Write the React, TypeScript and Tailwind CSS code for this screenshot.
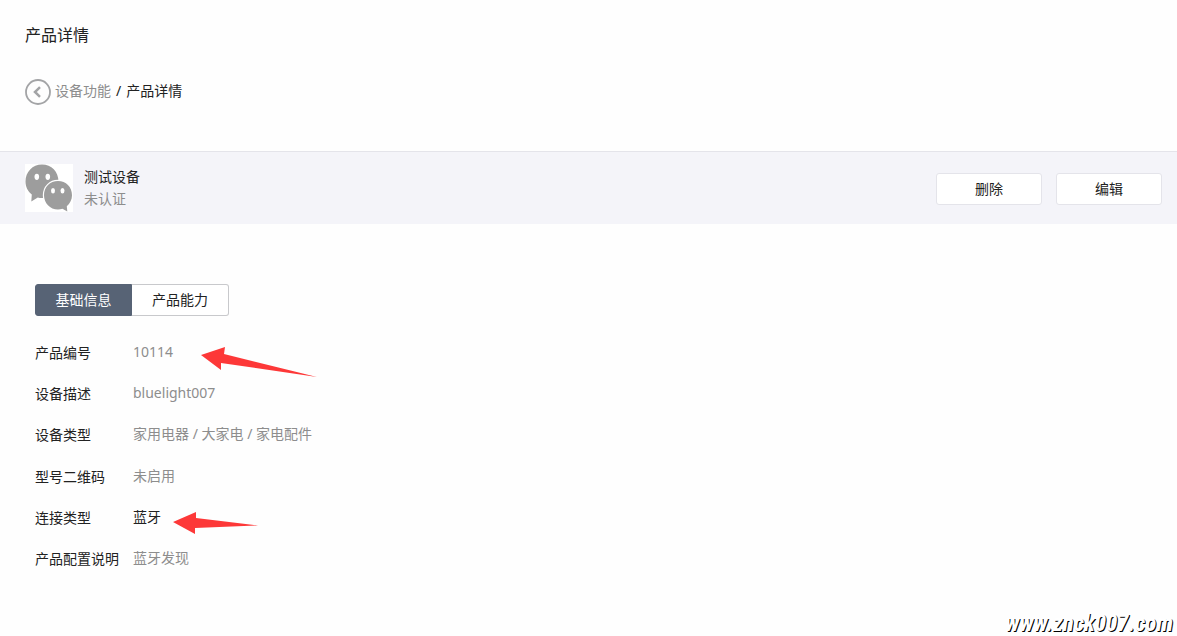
import React, { useState } from "react";

type Field = {
  label: string;
  value: string;
  strong?: boolean;
  arrow?: React.ReactNode;
};

const LongArrow = () => (
  <svg
    className="absolute top-1 left-[68px]"
    width="116"
    height="32"
    viewBox="0 0 116 32"
    aria-hidden="true"
  >
    <path d="M0 9 L24 1 L23 8 L116 31 L20 17 L20 24 Z" fill="#fd3838" />
  </svg>
);

const ShortArrow = () => (
  <svg
    className="absolute top-1 left-[40px]"
    width="86"
    height="24"
    viewBox="0 0 86 24"
    aria-hidden="true"
  >
    <path d="M0 11 L23 1 L23 7 L85 14.5 L22 17 L22 23 Z" fill="#fd3838" />
  </svg>
);

const fields: Field[] = [
  { label: "产品编号", value: "10114", arrow: <LongArrow /> },
  { label: "设备描述", value: "bluelight007" },
  { label: "设备类型", value: "家用电器 / 大家电 / 家电配件" },
  { label: "型号二维码", value: "未启用" },
  { label: "连接类型", value: "蓝牙", strong: true, arrow: <ShortArrow /> },
  { label: "产品配置说明", value: "蓝牙发现" },
];

function Avatar() {
  return (
    <svg className="size-12 shrink-0 bg-white" viewBox="0 0 48 48" role="img" aria-label="测试设备">
      <path
        d="M17 0.5 C26.5 0.5 33.5 7.5 33.5 17.5 C33.5 27 26.5 34 17 34 C15.5 34 14 33.9 12.8 33.5 L6.3 37.5 L6.8 30.5 C3 27.5 0.5 23 0.5 17.5 C0.5 8 7.5 0.5 17 0.5 Z"
        fill="#9d9d9d"
      />
      <ellipse cx="11.8" cy="12.8" rx="2.3" ry="3.1" fill="#fff" />
      <ellipse cx="22.8" cy="12.8" rx="2.3" ry="3.1" fill="#fff" />
      <path
        d="M33 17 C41 17 47 23 47 31.2 C47 35.5 45 39.5 41.8 42.2 L42.3 47.5 L37.5 44.8 C36 45.3 34.5 45.5 33 45.5 C25 45.5 19 39 19 31.2 C19 23 25 17 33 17 Z"
        fill="#9d9d9d"
        stroke="#fff"
        strokeWidth="2.4"
        paintOrder="stroke"
      />
      <ellipse cx="28" cy="26.8" rx="2" ry="2.7" fill="#fff" />
      <ellipse cx="37.5" cy="26.8" rx="2" ry="2.7" fill="#fff" />
    </svg>
  );
}

function ActionButton({ children }: { children: React.ReactNode }) {
  return (
    <button
      type="button"
      className="h-8 w-[106px] rounded-[3px] border border-[#e4e4ea] bg-white text-sm text-[#222]"
    >
      {children}
    </button>
  );
}

export default function App() {
  const [tab, setTab] = useState(0);
  const on = "border-[#576375] bg-[#576375] text-white";
  const off = "border-[#c8c9cc] bg-white text-[#222]";

  return (
    <div className="relative min-h-screen bg-[#fefefe] font-['Noto_Sans','Noto_Sans_CJK_SC',sans-serif] text-sm text-[#222]">
      <header className="px-[25px] pt-[23px]">
        <h1 className="text-base leading-6">产品详情</h1>
      </header>

      <nav className="mt-8 flex items-center px-[25px]" aria-label="面包屑">
        <a href="#back" aria-label="返回">
          <svg className="block size-[26px]" viewBox="0 0 26 26" fill="none" stroke="#a3a4a6">
            <circle cx="13" cy="13" r="12" strokeWidth="1.8" />
            <path d="M15 8.2 L10 13 L15 17.8" strokeWidth="2.5" />
          </svg>
        </a>
        <div className="ml-1 flex gap-[5px] pb-0.5">
          <a href="#features" className="text-[#8d8d8d]">
            设备功能
          </a>
          <span>/</span>
          <span>产品详情</span>
        </div>
      </nav>

      <section className="mt-[46px] flex h-[73px] items-center border-t border-[#e4e4ea] bg-[#f4f4f9] pr-[15px] pl-[25px]">
        <Avatar />
        <div className="ml-[11px] leading-[22px]">
          <h2>测试设备</h2>
          <p className="text-[#8d8d8d]">未认证</p>
        </div>
        <div className="ml-auto flex gap-[14px] pt-0.5">
          <ActionButton>删除</ActionButton>
          <ActionButton>编辑</ActionButton>
        </div>
      </section>

      <main className="px-[35px] pt-[60px]">
        <div className="flex" role="tablist">
          <button
            type="button"
            role="tab"
            aria-selected={tab === 0}
            onClick={() => setTab(0)}
            className={`h-8 w-[97px] rounded-l-[3px] border ${tab === 0 ? on : off}`}
          >
            基础信息
          </button>
          <button
            type="button"
            role="tab"
            aria-selected={tab === 1}
            onClick={() => setTab(1)}
            className={`h-8 w-[97px] rounded-r-[3px] border border-l-0 ${tab === 1 ? on : off}`}
          >
            产品能力
          </button>
        </div>

        <dl className="mt-4 grid min-h-[248px] auto-rows-fr">
          {fields.map((f) => (
            <div key={f.label} className="flex items-center">
              <dt className="w-[98px] shrink-0">{f.label}</dt>
              <dd className={f.strong ? "relative pb-0.5" : "relative pb-0.5 text-[#8d8d8d]"}>
                {f.value}
                {f.arrow}
              </dd>
            </div>
          ))}
        </dl>
      </main>

      <div className="absolute right-1 bottom-0 font-['Haettenschweiler','Roboto_Condensed','Open_Sans_Condensed','Noto_Sans_ExtraCondensed','Noto_Sans_Condensed','Liberation_Sans',sans-serif] text-[23px] leading-6 font-bold text-white italic [text-shadow:1px_1px_0_#000]">
        www.znck007.com
      </div>
    </div>
  );
}
